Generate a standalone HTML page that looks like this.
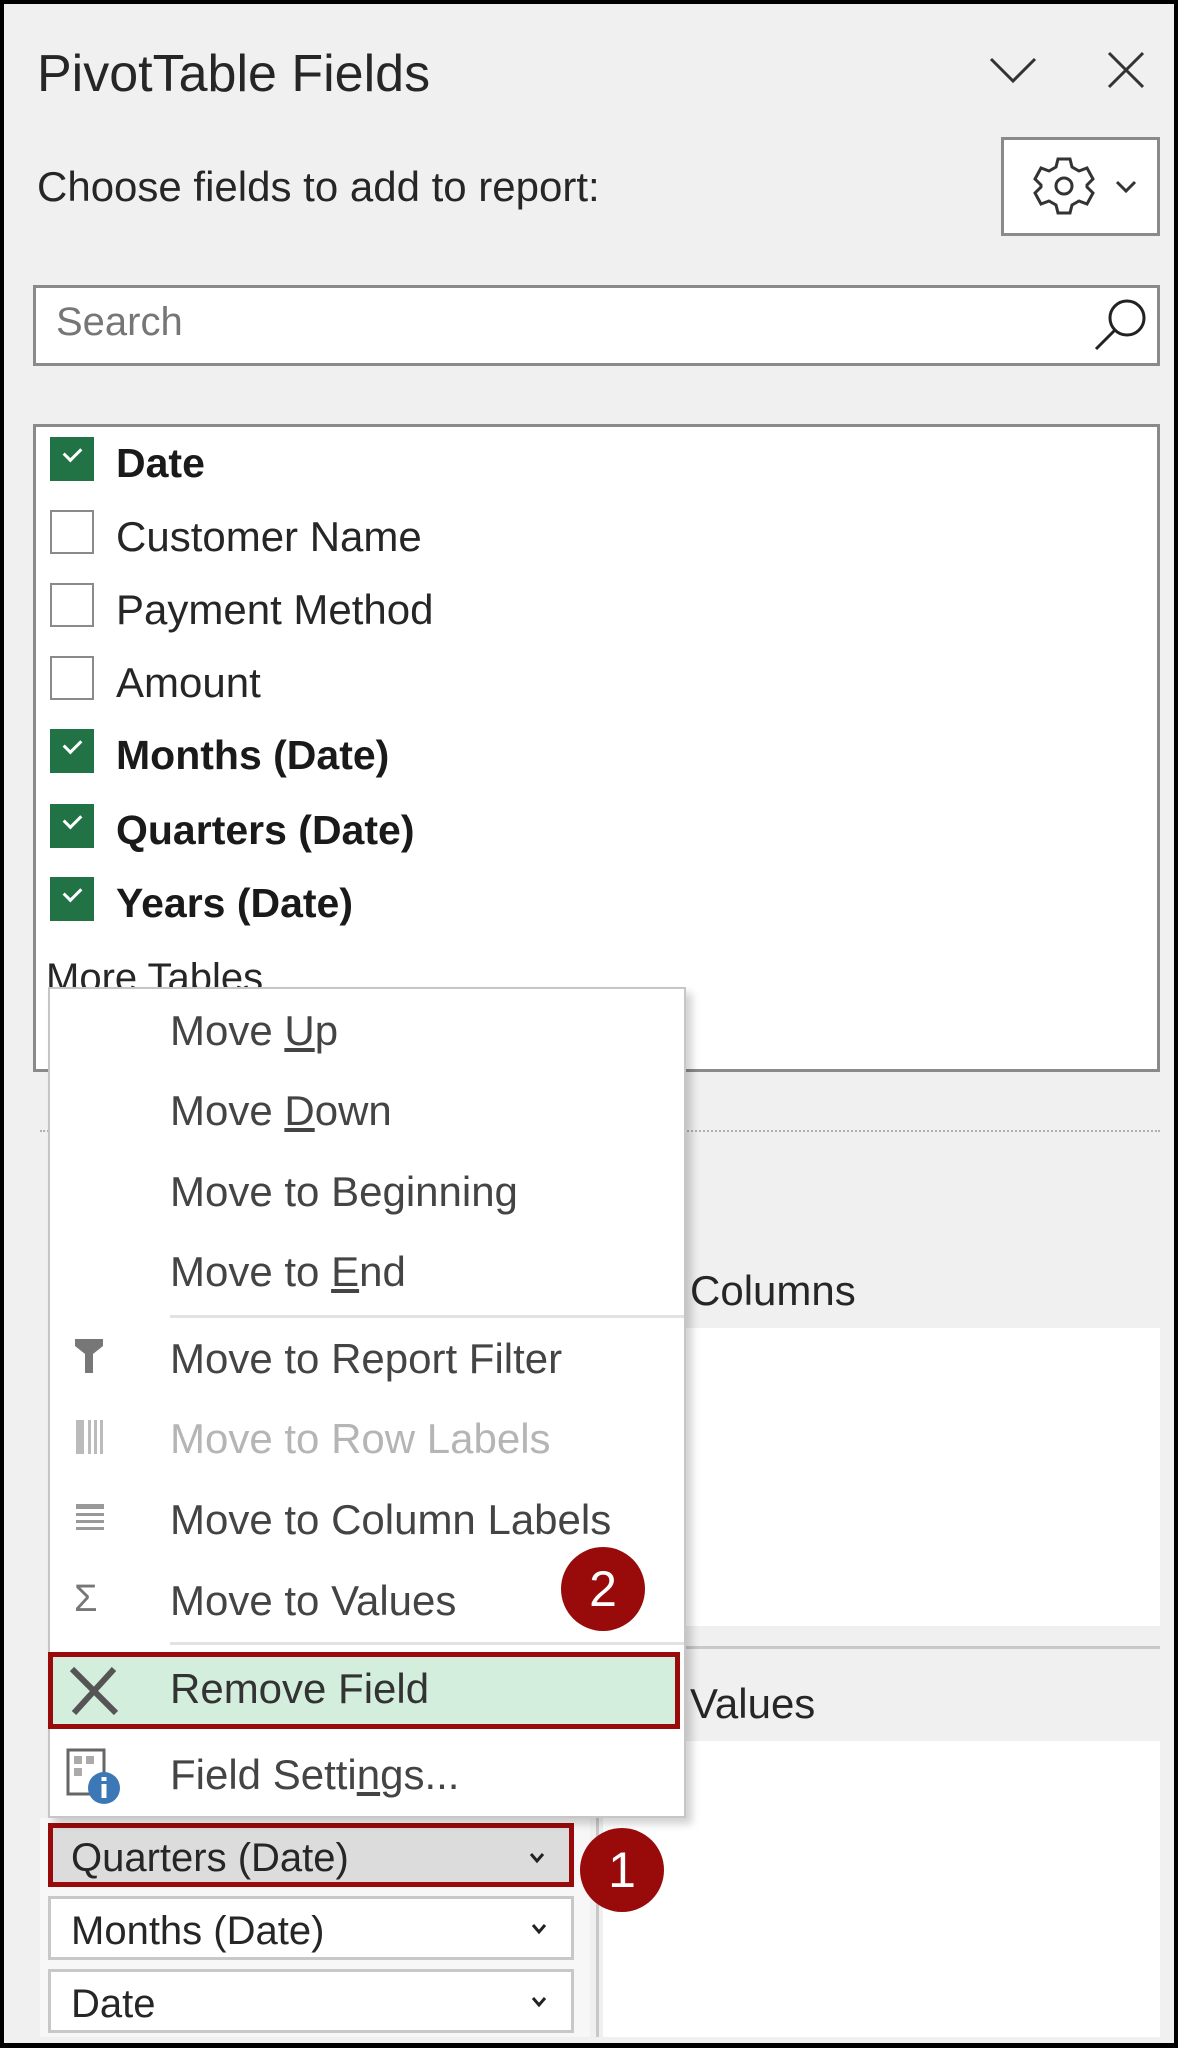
<!DOCTYPE html>
<html><head><meta charset="utf-8"><style>
*{margin:0;padding:0;box-sizing:border-box}
body{width:1178px;height:2048px;background:#000;position:relative;overflow:hidden;font-family:"Liberation Sans",sans-serif;color:#262626}
#p{position:absolute;left:4px;top:4px;width:1170px;height:2039px;background:#f0f0f0}
.a{position:absolute}
.t{position:absolute;white-space:nowrap;line-height:1}
.cb{position:absolute;left:50px;width:44px;height:44px;border:2px solid #8a8a8a;background:#fff}
.cb.on{background:#217346;border-color:#217346}
.cb.on:after{content:"";position:absolute;left:12px;top:8px;width:14px;height:8px;border-left:3px solid #fff;border-bottom:3px solid #fff;transform:rotate(-45deg)}
.fl{position:absolute;left:116px;font-size:42px;line-height:1;white-space:nowrap}
.b{font-weight:bold;color:#1a1a1a;font-size:41px}
.mi{position:absolute;left:170px;font-size:42px;line-height:1;color:#444;white-space:nowrap}
.dd{position:absolute;left:48px;width:526px;height:64px;border:3px solid #c8c8c8;background:#fff;font-size:40px}
.dd span{position:absolute;left:20px;top:10px;white-space:nowrap}
.dd svg{position:absolute;right:24px;top:24px}
.badge{position:absolute;width:84px;height:84px;border-radius:50%;background:#990a0a;color:#fff;font-size:50px;text-align:center;line-height:84px}
</style></head><body>
<div id="p"></div>
<div class="t" style="left:37px;top:48px;font-size:52px;color:#262626">PivotTable Fields</div>
<svg class="a" style="left:988px;top:55px" width="50" height="30"><path d="M3 4 L25 26 L47 4" fill="none" stroke="#333" stroke-width="3"/></svg>
<svg class="a" style="left:1106px;top:50px" width="40" height="40"><path d="M3 3 L37 37 M37 3 L3 37" stroke="#333" stroke-width="3"/></svg>
<div class="t" style="left:37px;top:166px;font-size:42px">Choose fields to add to report:</div>
<div class="a" style="left:1001px;top:137px;width:159px;height:99px;border:3px solid #8a8a8a;background:#fff"></div>
<svg class="a" style="left:1033px;top:155px" width="62" height="62" viewBox="0 0 62 62"><path d="M25 4 H37 L39 12 L46 16 L54 13 L60 24 L54 30 V32 L60 38 L54 49 L46 46 L39 50 L37 58 H25 L23 50 L16 46 L8 49 L2 38 L8 32 V30 L2 24 L8 13 L16 16 L23 12 Z" fill="none" stroke="#333" stroke-width="3"/><circle cx="31" cy="31" r="8" fill="none" stroke="#333" stroke-width="3"/></svg>
<svg class="a" style="left:1115px;top:180px" width="22" height="14"><path d="M2 2 L11 11 L20 2" fill="none" stroke="#333" stroke-width="3"/></svg>
<div class="a" style="left:33px;top:285px;width:1127px;height:81px;border:3px solid #8a8a8a;background:#fff"></div>
<div class="t" style="left:56px;top:302px;font-size:40px;color:#767676">Search</div>
<svg class="a" style="left:1090px;top:295px" width="60" height="60"><circle cx="37" cy="23" r="17" fill="none" stroke="#222" stroke-width="3"/><path d="M25 35 L6 54" stroke="#222" stroke-width="3"/></svg>
<div class="a" style="left:33px;top:424px;width:1127px;height:648px;border:3px solid #8a8a8a;background:#fff"></div>
<div class="cb on" style="top:437px"></div><div class="fl b" style="top:443px">Date</div>
<div class="cb" style="top:510px"></div><div class="fl" style="top:516px">Customer Name</div>
<div class="cb" style="top:583px"></div><div class="fl" style="top:589px">Payment Method</div>
<div class="cb" style="top:656px"></div><div class="fl" style="top:662px">Amount</div>
<div class="cb on" style="top:729px"></div><div class="fl b" style="top:735px">Months (Date)</div>
<div class="cb on" style="top:804px"></div><div class="fl b" style="top:810px">Quarters (Date)</div>
<div class="cb on" style="top:877px"></div><div class="fl b" style="top:883px">Years (Date)</div>
<div class="t" style="left:46px;top:958px;font-size:40px">More Tables</div>
<div class="a" style="left:40px;top:1130px;width:1120px;border-top:2px dotted #b0b0b0"></div>
<div class="t" style="left:690px;top:1270px;font-size:42px">Columns</div>
<div class="a" style="left:603px;top:1328px;width:557px;height:298px;background:#fff"></div>
<div class="a" style="left:603px;top:1646px;width:557px;height:3px;background:#c8c8c8"></div>
<div class="t" style="left:690px;top:1683px;font-size:42px">Values</div>
<div class="a" style="left:603px;top:1741px;width:557px;height:296px;background:#fff"></div>
<div class="a" style="left:40px;top:1818px;width:550px;height:219px;background:#f7f7f7"></div>
<div class="a" style="left:596px;top:1818px;width:3px;height:219px;background:#c8c8c8"></div>
<div class="dd" style="top:1823px;background:#dcdcdc;border:5px solid #990a0a"><span style="left:18px;top:8px">Quarters (Date)</span><svg width="16" height="12"><path d="M2 2 L8 9 L14 2" fill="none" stroke="#222" stroke-width="3"/></svg></div>
<div class="dd" style="top:1896px"><span>Months (Date)</span><svg width="16" height="12"><path d="M2 2 L8 9 L14 2" fill="none" stroke="#222" stroke-width="3"/></svg></div>
<div class="dd" style="top:1969px"><span>Date</span><svg width="16" height="12"><path d="M2 2 L8 9 L14 2" fill="none" stroke="#222" stroke-width="3"/></svg></div>
<!-- menu -->
<div class="a" style="left:48px;top:987px;width:638px;height:831px;background:#fff;border:2px solid #c6c6c6;box-shadow:6px 6px 8px rgba(0,0,0,.18)"></div>
<div class="mi" style="top:1010px">Move <u>U</u>p</div>
<div class="mi" style="top:1090px">Move <u>D</u>own</div>
<div class="mi" style="top:1171px">Move to Be<u>g</u>inning</div>
<div class="mi" style="top:1251px">Move to <u>E</u>nd</div>
<div class="a" style="left:170px;top:1315px;width:514px;height:3px;background:#e2e2e2"></div>
<svg class="a" style="left:74px;top:1338px" width="30" height="36"><path d="M1 1 H29 V8 L19 16 V35 H11 V16 L1 8 Z" fill="#777"/></svg>
<div class="mi" style="top:1338px">Move to Report Filter</div>
<svg class="a" style="left:76px;top:1420px" width="28" height="34"><rect x="0" y="0" width="8" height="34" fill="#bbb"/><rect x="12" y="0" width="3" height="34" fill="#bbb"/><rect x="18" y="0" width="3" height="34" fill="#bbb"/><rect x="24" y="0" width="3" height="34" fill="#bbb"/></svg>
<div class="mi" style="top:1418px;color:#b5b5b5">Move to Row Labels</div>
<svg class="a" style="left:76px;top:1504px" width="28" height="30"><rect y="0" width="28" height="5" fill="#999"/><rect y="9" width="28" height="3" fill="#999"/><rect y="16" width="28" height="3" fill="#999"/><rect y="23" width="28" height="3" fill="#999"/></svg>
<div class="mi" style="top:1499px">Move to Column Labels</div>
<div class="t" style="left:74px;top:1580px;font-size:38px;color:#777">Σ</div>
<div class="mi" style="top:1580px">Move to Values</div>
<div class="a" style="left:170px;top:1642px;width:514px;height:3px;background:#e2e2e2"></div>
<div class="a" style="left:48px;top:1652px;width:632px;height:77px;background:#d3eedc;border:5px solid #990a0a"></div>
<svg class="a" style="left:68px;top:1665px" width="52" height="52"><path d="M4 4 L48 48 M46 4 L6 48" stroke="#555" stroke-width="6"/></svg>
<div class="mi" style="top:1668px;color:#333">Remove Field</div>
<svg class="a" style="left:66px;top:1748px" width="56" height="58"><rect x="2" y="2" width="36" height="44" fill="none" stroke="#666" stroke-width="3"/><rect x="8" y="8" width="8" height="8" fill="#aaa"/><rect x="20" y="8" width="8" height="8" fill="#aaa"/><rect x="8" y="20" width="8" height="8" fill="#aaa"/><circle cx="38" cy="40" r="16" fill="#3c78b5"/><rect x="35.5" y="36" width="5" height="14" fill="#fff"/><rect x="35.5" y="29" width="5" height="4" fill="#fff"/></svg>
<div class="mi" style="top:1754px">Field Setti<u>n</u>gs...</div>
<div class="badge" style="left:561px;top:1547px">2</div>
<div class="badge" style="left:580px;top:1828px">1</div>
</body></html>
